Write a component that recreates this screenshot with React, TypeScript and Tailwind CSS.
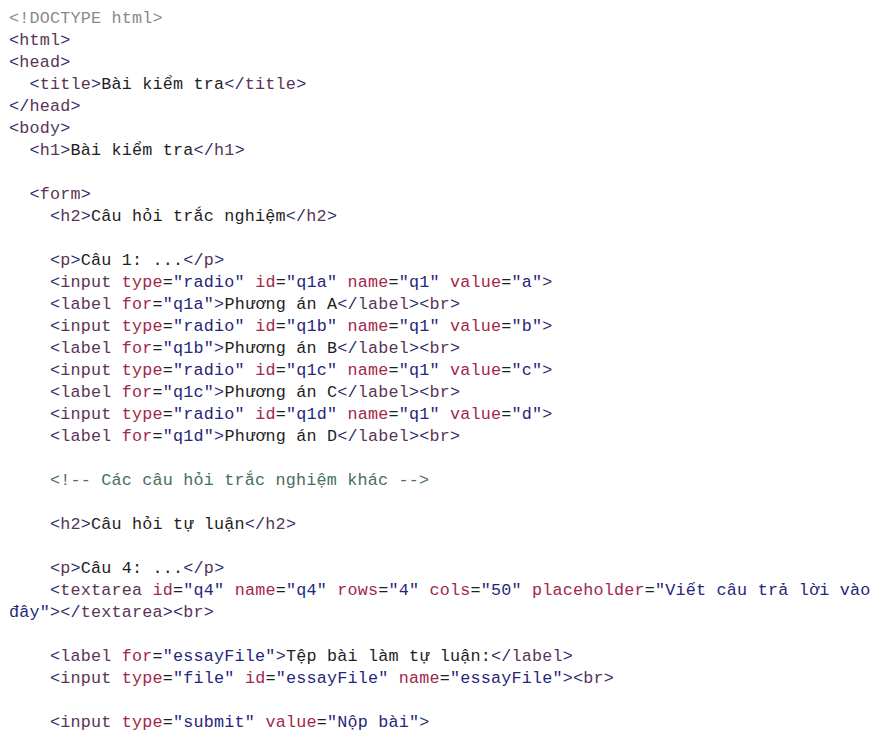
const SOURCE = `<!DOCTYPE html>
<html>
<head>
  <title>Bài kiểm tra</title>
</head>
<body>
  <h1>Bài kiểm tra</h1>

  <form>
    <h2>Câu hỏi trắc nghiệm</h2>

    <p>Câu 1: ...</p>
    <input type="radio" id="q1a" name="q1" value="a">
    <label for="q1a">Phương án A</label><br>
    <input type="radio" id="q1b" name="q1" value="b">
    <label for="q1b">Phương án B</label><br>
    <input type="radio" id="q1c" name="q1" value="c">
    <label for="q1c">Phương án C</label><br>
    <input type="radio" id="q1d" name="q1" value="d">
    <label for="q1d">Phương án D</label><br>

    <!-- Các câu hỏi trắc nghiệm khác -->

    <h2>Câu hỏi tự luận</h2>

    <p>Câu 4: ...</p>
    <textarea id="q4" name="q4" rows="4" cols="50" placeholder="Viết câu trả lời vào
đây"></textarea><br>

    <label for="essayFile">Tệp bài làm tự luận:</label>
    <input type="file" id="essayFile" name="essayFile"><br>

    <input type="submit" value="Nộp bài">`;

type Kind = "text" | "punct" | "tag" | "attr" | "eq" | "value" | "comment" | "doctype";

const COLORS: Record<Kind, string> = {
  text: "text-[#1e1e1e]",
  punct: "text-[#2c2c6a]",
  tag: "text-[#5a3556]",
  attr: "text-[#a1284a]",
  eq: "text-[#1e1e1e]",
  value: "text-[#26267a]",
  comment: "text-[#46705a]",
  doctype: "text-[#8a8a8a]",
};

type Token = { kind: Kind; text: string };

// small html highlighter, keeps state across lines so a wrapped attribute value stays coloured
function tokenize(src: string): Token[][] {
  const lines: Token[][] = [];
  let state: "text" | "attrs" | "value" = "text";
  for (const line of src.split("\n")) {
    const out: Token[] = [];
    const push = (kind: Kind, text: string) => {
      if (text) out.push({ kind, text });
    };
    let i = 0;
    while (i < line.length) {
      if (state === "value") {
        const end = line.indexOf('"', i);
        if (end === -1) {
          push("value", line.slice(i));
          i = line.length;
        } else {
          push("value", line.slice(i, end + 1));
          i = end + 1;
          state = "attrs";
        }
        continue;
      }
      if (state === "text") {
        if (line.startsWith("<!--", i)) {
          const end = line.indexOf("-->", i);
          const stop = end === -1 ? line.length : end + 3;
          push("comment", line.slice(i, stop));
          i = stop;
        } else if (line.startsWith("<!", i)) {
          const end = line.indexOf(">", i);
          push("doctype", line.slice(i, end + 1));
          i = end + 1;
        } else if (line[i] === "<") {
          const open = line[i + 1] === "/" ? "</" : "<";
          push("punct", open);
          i += open.length;
          const m = /^[a-z0-9]+/.exec(line.slice(i));
          if (m) {
            push("tag", m[0]);
            i += m[0].length;
          }
          state = "attrs";
        } else {
          const next = line.indexOf("<", i);
          const stop = next === -1 ? line.length : next;
          push("text", line.slice(i, stop));
          i = stop;
        }
        continue;
      }
      // attrs
      const ch = line[i];
      if (ch === ">") {
        push("punct", ">");
        i++;
        state = "text";
      } else if (ch === "=") {
        push("eq", "=");
        i++;
      } else if (ch === '"') {
        const end = line.indexOf('"', i + 1);
        if (end === -1) {
          push("value", line.slice(i));
          i = line.length;
          state = "value";
        } else {
          push("value", line.slice(i, end + 1));
          i = end + 1;
        }
      } else if (/[A-Za-z]/.test(ch)) {
        const m = /^[A-Za-z-]+/.exec(line.slice(i))!;
        push("attr", m[0]);
        i += m[0].length;
      } else {
        push("text", ch);
        i++;
      }
    }
    lines.push(out);
  }
  return lines;
}

const LINES = tokenize(SOURCE);

export default function App() {
  return (
    <div className="min-h-screen w-full bg-white pt-[8px] pl-[9px] font-['Liberation_Mono',monospace] text-[16.75px] tracking-[0.2px]">
      {LINES.map((tokens, idx) => (
        <div key={idx} className="h-[22px] whitespace-pre leading-[22px]">
          {tokens.map((t, j) => (
            <span key={j} className={COLORS[t.kind]}>
              {t.text}
            </span>
          ))}
        </div>
      ))}
    </div>
  );
}
